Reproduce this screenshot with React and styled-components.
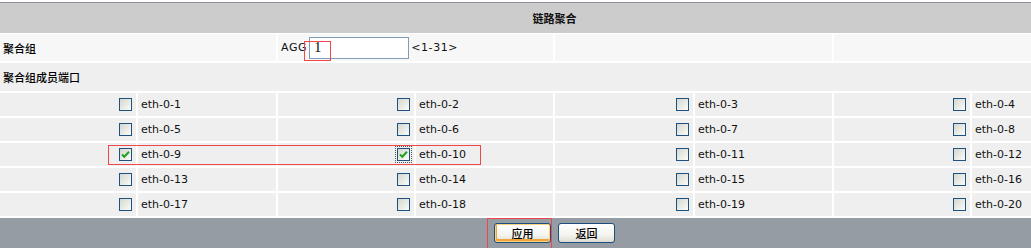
import React from "react";
import styled, { createGlobalStyle, css } from "styled-components";

const GlobalStyle = createGlobalStyle`
  html, body {
    margin: 0;
    padding: 0;
    background: #ffffff;
  }
  body {
    font-family: "DejaVu Sans", "Noto Sans CJK SC", sans-serif;
    font-size: 11px;
    color: #000;
  }
`;

const Page = styled.div`
  position: relative;
  width: 1031px;
  height: 248px;
  overflow: hidden;
  padding-top: 2px;
  box-sizing: border-box;
`;

const Header = styled.div`
  height: 30px;
  border-top: 1px solid #8e8e9c;
  background: #cccccc;
  display: flex;
  align-items: center;
  justify-content: center;
  padding-left: 78px;
`;

const Title = styled.span`
  font-family: "Noto Sans CJK SC", sans-serif;
  font-size: 11px;
  font-weight: 700;
  color: #111;
`;

const Grid = styled.div`
  margin-top: 1px;
  display: grid;
  grid-template-columns: 136px 138px 136px 137px 138px 137px 136px 1fr;
  grid-template-rows: 27px 28px repeat(5, 23px);
  gap: 2px;
  background: #ffffff;
`;

const Cell = styled.div`
  grid-column: span ${(p) => p.$span || 1};
  background: ${(p) => (p.$light ? "#f7f7f7" : "#efefef")};
  display: flex;
  align-items: center;
  padding: 0 3px;
  min-width: 0;
  white-space: nowrap;
  ${(p) =>
    p.$right &&
    css`
      justify-content: flex-end;
      padding-right: 4px;
    `}
`;

const Label = styled.span`
  font-family: "Noto Sans CJK SC", sans-serif;
  font-size: 11px;
  font-weight: 500;
  color: #000;
`;

const AggField = styled.div`
  display: flex;
  align-items: center;
  font-family: "DejaVu Sans", sans-serif;
  font-size: 11px;
  color: #111;
  letter-spacing: 0.6px;
`;

const AggInput = styled.input`
  width: 100px;
  height: 22px;
  box-sizing: border-box;
  border: 1px solid #7f9db9;
  margin: 0 2px 0 2px;
  padding: 0 4px;
  font-family: "Liberation Serif", serif;
  font-size: 14px;
  color: #000;
  background: #fff;
  outline: none;
`;

const Box = styled.span`
  display: inline-flex;
  align-items: center;
  justify-content: center;
  width: 13px;
  height: 13px;
  box-sizing: border-box;
  border: 1px solid #1c5180;
  background: linear-gradient(135deg, #d6d6d0 0%, #ebebe6 55%, #fbfbf9 100%);
  ${(p) =>
    p.$focus &&
    css`
      outline: 1px dotted #555;
      outline-offset: 1px;
    `}
`;

const PortName = styled.span`
  font-family: "DejaVu Sans", sans-serif;
  font-size: 11px;
  color: #111;
`;

const Footer = styled.div`
  margin-top: 2px;
  height: 30px;
  background: #959ca4;
  display: flex;
  align-items: center;
  justify-content: center;
  gap: 7px;
  padding-left: 78px;
`;

const Button = styled.button`
  width: 57px;
  height: 20px;
  box-sizing: border-box;
  border: 1px solid #1c4f7e;
  border-radius: 3px;
  background: linear-gradient(#ffffff 0%, #f4f4f0 60%, #dedcd2 100%);
  font-family: "Noto Sans CJK SC", sans-serif;
  font-size: 11px;
  font-weight: 500;
  color: #000;
  padding: 0;
  display: flex;
  align-items: center;
  justify-content: center;
  ${(p) =>
    p.$primary &&
    css`
      box-shadow: inset 0 0 0 1px #fcd27c, inset 1px -2px 0 1px #f0a53a;
    `}
`;

const Mark = styled.div`
  position: absolute;
  left: ${(p) => p.$x}px;
  top: ${(p) => p.$y}px;
  width: ${(p) => p.$w}px;
  height: ${(p) => p.$h}px;
  border: 1px solid #f0474a;
  box-sizing: border-box;
  pointer-events: none;
`;

function Checkbox({ checked, focus }) {
  return (
    <Box $focus={focus}>
      {checked && (
        <svg width="11" height="11" viewBox="0 0 11 11">
          <path
            d="M2 5.5 L4.3 7.8 L9 2.8"
            fill="none"
            stroke="#21a121"
            strokeWidth="2"
          />
        </svg>
      )}
    </Box>
  );
}

const ports = Array.from({ length: 20 }, (_, i) => i + 1);
const selected = [9, 10];

export default function App() {
  return (
    <>
      <GlobalStyle />
      <Page>
        <Header>
          <Title>链路聚合</Title>
        </Header>
        <Grid>
          <Cell $span={2} $light>
            <Label>聚合组</Label>
          </Cell>
          <Cell $span={2} $light>
            <AggField>
              AGG
              <AggInput defaultValue="1" />
              &lt;1-31&gt;
            </AggField>
          </Cell>
          <Cell $span={2} $light />
          <Cell $span={2} $light />
          <Cell $span={8}>
            <Label>聚合组成员端口</Label>
          </Cell>
          {ports.map((n) => (
            <React.Fragment key={n}>
              <Cell $right>
                <Checkbox checked={selected.includes(n)} focus={n === 10} />
              </Cell>
              <Cell>
                <PortName>eth-0-{n}</PortName>
              </Cell>
            </React.Fragment>
          ))}
        </Grid>
        <Footer>
          <Button $primary>应用</Button>
          <Button>返回</Button>
        </Footer>
        <Mark $x={304} $y={41} $w={27} $h={20} />
        <Mark $x={108} $y={145} $w={373} $h={20} />
        <Mark $x={487} $y={218} $w={65} $h={32} />
      </Page>
    </>
  );
}
